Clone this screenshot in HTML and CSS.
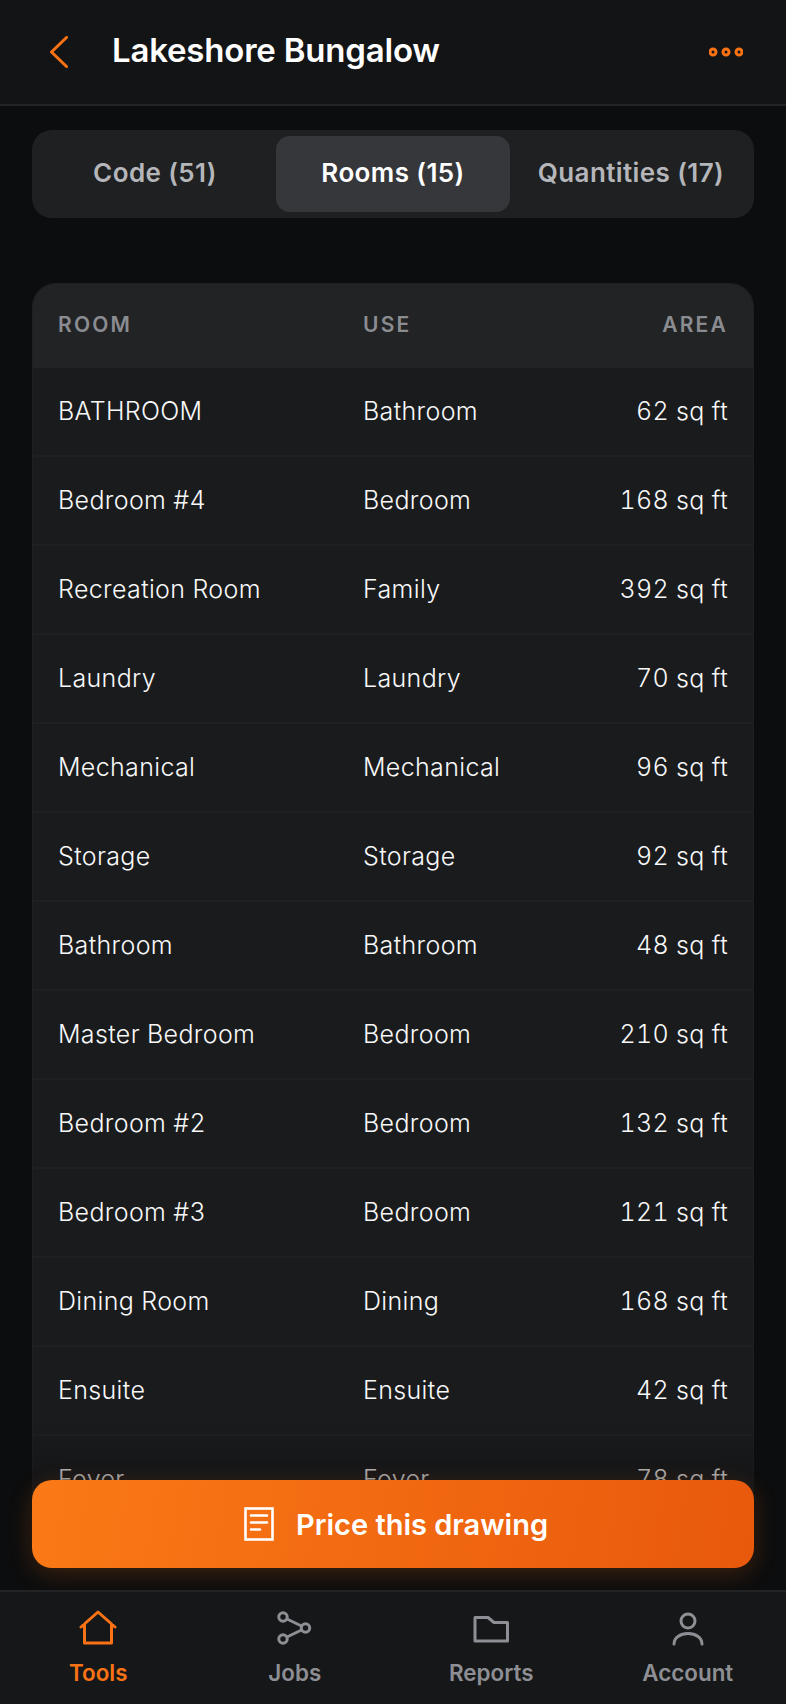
FILE: index.html
```html
<!DOCTYPE html>
<html lang="en">
<head>
    <meta charset="UTF-8">
    <meta name="viewport" content="width=device-width, initial-scale=1.0">
    <title>Lakeshore Bungalow</title>
    <link rel="stylesheet" href="styles.css">
</head>
<body>
<div class="app">
    <header class="top-bar">
        <button class="back-btn" aria-label="Back">
            <svg width="18" height="32" viewBox="0 0 18 32" fill="none" stroke="#f97316" stroke-width="3" stroke-linecap="round" stroke-linejoin="round"><path d="M16.5 1.5 1.5 16l15 14.5"/></svg>
        </button>
        <h1>Lakeshore Bungalow</h1>
        <button class="more-btn" aria-label="More">
            <svg width="34" height="10" viewBox="0 0 34 10" fill="none" stroke="#f97316" stroke-width="3"><circle cx="4" cy="5" r="3"/><circle cx="17" cy="5" r="3"/><circle cx="30" cy="5" r="3"/></svg>
        </button>
    </header>

    <main class="content">
        <div class="tabs">
            <div class="tab first">Code (51)</div>
            <div class="tab active">Rooms (15)</div>
            <div class="tab last">Quantities (17)</div>
        </div>

        <section class="rooms-card">
            <div class="row head">
                <span>ROOM</span>
                <span>USE</span>
                <span>AREA</span>
            </div>
            <div class="row"><span>BATHROOM</span><span>Bathroom</span><span>62 sq ft</span></div>
            <div class="row"><span>Bedroom #4</span><span>Bedroom</span><span>168 sq ft</span></div>
            <div class="row"><span>Recreation Room</span><span>Family</span><span>392 sq ft</span></div>
            <div class="row"><span>Laundry</span><span>Laundry</span><span>70 sq ft</span></div>
            <div class="row"><span>Mechanical</span><span>Mechanical</span><span>96 sq ft</span></div>
            <div class="row"><span>Storage</span><span>Storage</span><span>92 sq ft</span></div>
            <div class="row"><span>Bathroom</span><span>Bathroom</span><span>48 sq ft</span></div>
            <div class="row"><span>Master Bedroom</span><span>Bedroom</span><span>210 sq ft</span></div>
            <div class="row"><span>Bedroom #2</span><span>Bedroom</span><span>132 sq ft</span></div>
            <div class="row"><span>Bedroom #3</span><span>Bedroom</span><span>121 sq ft</span></div>
            <div class="row"><span>Dining Room</span><span>Dining</span><span>168 sq ft</span></div>
            <div class="row"><span>Ensuite</span><span>Ensuite</span><span>42 sq ft</span></div>
            <div class="row"><span>Foyer</span><span>Foyer</span><span>78 sq ft</span></div>
        </section>

        <div class="cta-wrap">
            <button class="cta">
                <svg width="30" height="34" viewBox="0 0 30 34" fill="none" stroke="#fff" stroke-width="2.6"><rect x="1.5" y="1.5" width="27" height="31"/><path d="M7 8.5h16M7 15.5h16M7 22.5h9" stroke-linecap="round"/></svg>
                Price this drawing
            </button>
        </div>
    </main>

    <nav class="bottom-nav">
        <a class="nav-item active">
            <svg width="38" height="36" viewBox="0 0 38 36" fill="none" stroke="currentColor" stroke-width="3" stroke-linecap="round" stroke-linejoin="round"><path d="M2 17 19 2l17 15M5.500 14v19h27V14"/></svg>
            Tools
        </a>
        <a class="nav-item">
            <svg width="36" height="36" viewBox="0 0 36 36" fill="none" stroke="currentColor" stroke-width="3"><circle cx="6" cy="7" r="4.200"/><circle cx="6" cy="29" r="4.200"/><circle cx="28.500" cy="18" r="4.200"/><path d="m10 9 14.500 7M10 27l14.500-7"/></svg>
            Jobs
        </a>
        <a class="nav-item">
            <svg width="36" height="36" viewBox="0 0 36 36" fill="none" stroke="currentColor" stroke-width="3" stroke-linejoin="round"><path d="M2 7.500h13l6 5h13.500V31H2z"/></svg>
            Reports
        </a>
        <a class="nav-item">
            <svg width="34" height="36" viewBox="0 0 34 36" fill="none" stroke="currentColor" stroke-width="3" stroke-linecap="round"><circle cx="17" cy="11" r="7"/><path d="M3 34c0-6 6-10.500 14-10.500S31 28 31 34"/></svg>
            Account
        </a>
    </nav>
</div>
</body>
</html>
```

FILE: styles.css
```css
* {
    box-sizing: border-box;
}

html, body {
    margin: 0;
    height: 100%;
}

body {
    background: #0c0d0e;
    color: #fff;
    font-family: Inter, "Liberation Sans", sans-serif;
}

button {
    background: none;
    border: 0;
    padding: 0;
    font-family: inherit;
    color: inherit;
}

.app {
    height: 1704px;
    display: flex;
    flex-direction: column;
    overflow: hidden;
}

.top-bar {
    height: 106px;
    flex: none;
    display: flex;
    align-items: center;
    padding: 0 43px 0 50px;
    background: #131415;
    border-bottom: 2px solid #232426;
}

.back-btn {
    display: flex;
    margin-right: 44px;
}

.top-bar h1 {
    flex: 1;
    margin: 0 0 4px;
    font-size: 33px;
    font-weight: 600;
    letter-spacing: -0.2px;
}

.more-btn {
    display: flex;
}

.content {
    flex: 1;
    min-height: 0;
    position: relative;
    overflow: hidden;
    padding: 24px 32px 0;
}

.tabs {
    display: grid;
    grid-template-columns: 238px 234px 236px;
    height: 88px;
    padding: 6px;
    background: #1f2022;
    border-radius: 20px;
}

.tab {
    display: flex;
    align-items: center;
    justify-content: center;
    padding-bottom: 4px;
    font-size: 26px;
    font-weight: 600;
    letter-spacing: 0.4px;
    color: #b5b6ba;
    border-radius: 14px;
    white-space: nowrap;
}

.tab.first {
    padding-right: 4px;
}

.tab.last {
    padding-left: 6px;
}

.tab.active {
    background: #36373b;
    color: #fff;
}

.rooms-card {
    margin-top: 65px;
    background: #1a1b1d;
    border: 1px solid #1f2022;
    border-bottom: 0;
    border-radius: 24px 24px 0 0;
}

.row {
    display: grid;
    grid-template-columns: 305px 1fr auto;
    align-items: center;
    height: 89px;
    padding: 0 25px 1px;
    border-bottom: 2px solid #1f2022;
    font-size: 25px;
    font-weight: 350;
    font-variant-numeric: tabular-nums;
    letter-spacing: 0.35px;
    color: #f8f8f9;
}

.row.head {
    height: 84px;
    padding-bottom: 3px;
    background: #222325;
    border-bottom: 0;
    border-radius: 23px 23px 0 0;
    font-size: 21px;
    font-weight: 600;
    letter-spacing: 2.2px;
    color: #8b8c91;
}

.cta-wrap {
    position: absolute;
    left: 0;
    right: 0;
    bottom: 0;
    padding: 60px 32px 22px;
    background: linear-gradient(to bottom, rgba(12, 13, 14, 0), #0c0d0e 90%);
}

.cta {
    width: 100%;
    height: 88px;
    display: flex;
    align-items: center;
    justify-content: center;
    gap: 22px;
    padding: 0 0 0 6px;
    border-radius: 20px;
    font-size: 29px;
    font-weight: 600;
    color: #fff;
    background: linear-gradient(100deg, #fb7916, #e8590c);
    box-shadow: 0 6px 24px rgba(249, 115, 22, 0.2);
}

.bottom-nav {
    height: 114px;
    flex: none;
    display: grid;
    grid-template-columns: repeat(4, 1fr);
    background: #161718;
    border-top: 2px solid #232426;
}

.nav-item {
    display: flex;
    flex-direction: column;
    align-items: center;
    gap: 13px;
    padding-top: 18px;
    font-size: 22.4px;
    font-weight: 600;
    color: #8e8f94;
}

.nav-item.active {
    color: #f97316;
}
```
